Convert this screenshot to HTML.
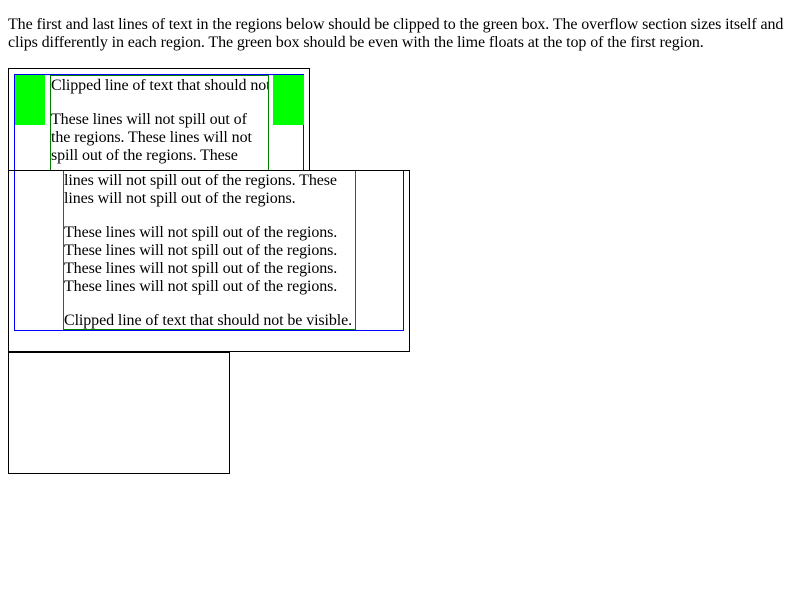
<!DOCTYPE html>
<html><head><style>
body{margin:0;font-family:"Liberation Serif",serif;font-size:16px;line-height:18px;color:#000;background:#fff;letter-spacing:-0.1px}
.a{position:absolute;box-sizing:border-box}
.t{position:absolute;white-space:nowrap}
</style></head><body>
<div class="t" style="left:8px;top:16px;white-space:normal;width:784px">The first and last lines of text in the regions below should be clipped to the green box. The overflow section sizes itself and clips differently in each region. The green box should be even with the lime floats at the top of the first region.</div>

<div class="a" style="left:8px;top:68px;width:302px;height:103px;border:1px solid #000;overflow:hidden">
  <div class="a" style="left:5px;top:5px;width:290px;height:120px;border:1px solid blue;border-bottom:none"></div>
  <div class="a" style="left:6px;top:6px;width:30px;height:50px;background:#0f0"></div>
  <div class="a" style="left:264px;top:6px;width:31px;height:50px;background:#0f0"></div>
  <div class="a" style="left:41px;top:6px;width:219px;height:120px;border:1px solid green;border-bottom:none;overflow:hidden">
    <div class="t" style="left:0px;top:1px">Clipped line of text that should not be visible.</div>
    <div class="t" style="left:0px;top:35px">These lines will not spill out of</div>
    <div class="t" style="left:0px;top:53px">the regions. These lines will not</div>
    <div class="t" style="left:0px;top:71px">spill out of the regions. These</div>
  </div>
</div>

<div class="a" style="left:8px;top:170px;width:402px;height:182px;border:1px solid #000;overflow:hidden">
  <div class="a" style="left:5px;top:-2px;width:390px;height:162px;border:1px solid blue;border-top:none"></div>
  <div class="a" style="left:54px;top:-2px;width:293px;height:161px;border:1px solid green;border-top:none;overflow:hidden">
    <div class="t" style="left:0px;top:3px">lines will not spill out of the regions. These</div>
    <div class="t" style="left:0px;top:21px">lines will not spill out of the regions.</div>
    <div class="t" style="left:0px;top:55px">These lines will not spill out of the regions.</div>
    <div class="t" style="left:0px;top:73px">These lines will not spill out of the regions.</div>
    <div class="t" style="left:0px;top:91px">These lines will not spill out of the regions.</div>
    <div class="t" style="left:0px;top:109px">These lines will not spill out of the regions.</div>
    <div class="t" style="left:0px;top:143px">Clipped line of text that should not be visible.</div>
  </div>
</div>

<div class="a" style="left:8px;top:352px;width:222px;height:122px;border:1px solid #000"></div>
</body></html>
